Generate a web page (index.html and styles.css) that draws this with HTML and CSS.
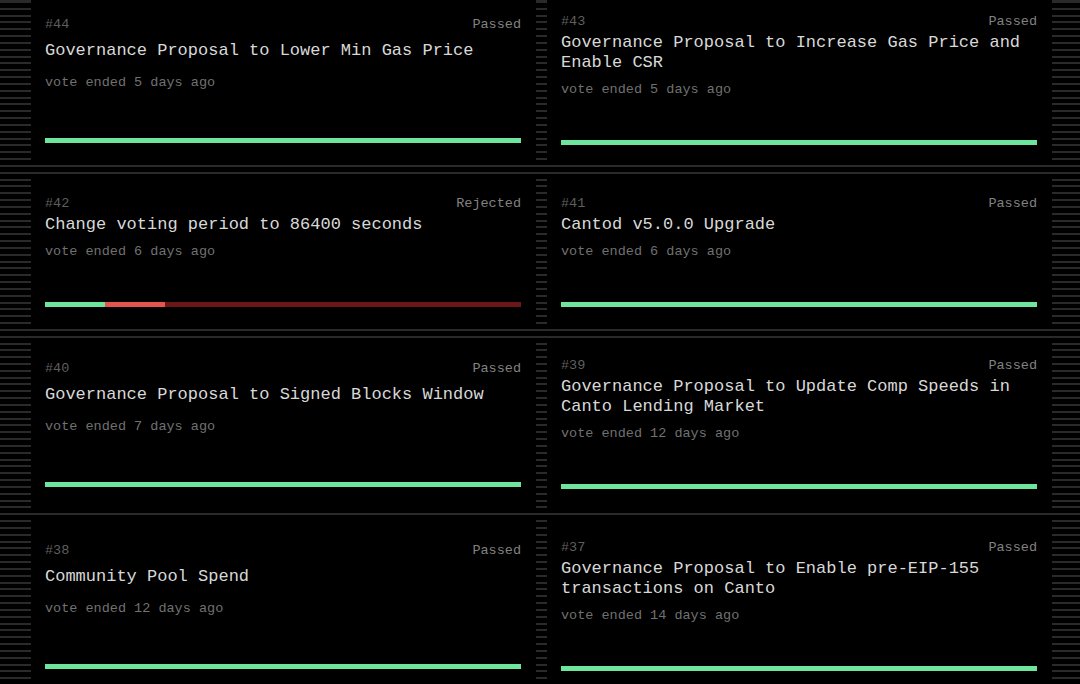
FILE: index.html
```html
<!DOCTYPE html>
<html lang="en">
<head>
<meta charset="utf-8">
<title>Proposals</title>
<link rel="stylesheet" href="styles.css">
</head>
<body>
<main class="page">
  <div class="grid">
    <section class="card">
      <div class="head"><span class="num">#44</span><span class="status">Passed</span></div>
      <div class="title">Governance Proposal to Lower Min Gas Price</div>
      <div class="date">vote ended 5 days ago</div>
      <div class="bar"><span class="yes" style="width:100%"></span></div>
    </section>
    <section class="card">
      <div class="head"><span class="num">#43</span><span class="status">Passed</span></div>
      <div class="title">Governance Proposal to Increase Gas Price and Enable CSR</div>
      <div class="date">vote ended 5 days ago</div>
      <div class="bar"><span class="yes" style="width:100%"></span></div>
    </section>
    <section class="card">
      <div class="head"><span class="num">#42</span><span class="status">Rejected</span></div>
      <div class="title">Change voting period to 86400 seconds</div>
      <div class="date">vote ended 6 days ago</div>
      <div class="bar rejected"><span class="yes" style="width:12.6%"></span><span class="no" style="width:12.6%"></span></div>
    </section>
    <section class="card">
      <div class="head"><span class="num">#41</span><span class="status">Passed</span></div>
      <div class="title">Cantod v5.0.0 Upgrade</div>
      <div class="date">vote ended 6 days ago</div>
      <div class="bar"><span class="yes" style="width:100%"></span></div>
    </section>
    <section class="card">
      <div class="head"><span class="num">#40</span><span class="status">Passed</span></div>
      <div class="title">Governance Proposal to Signed Blocks Window</div>
      <div class="date">vote ended 7 days ago</div>
      <div class="bar"><span class="yes" style="width:100%"></span></div>
    </section>
    <section class="card">
      <div class="head"><span class="num">#39</span><span class="status">Passed</span></div>
      <div class="title">Governance Proposal to Update Comp Speeds in Canto Lending Market</div>
      <div class="date">vote ended 12 days ago</div>
      <div class="bar"><span class="yes" style="width:100%"></span></div>
    </section>
    <section class="card">
      <div class="head"><span class="num">#38</span><span class="status">Passed</span></div>
      <div class="title">Community Pool Spend</div>
      <div class="date">vote ended 12 days ago</div>
      <div class="bar"><span class="yes" style="width:100%"></span></div>
    </section>
    <section class="card">
      <div class="head"><span class="num">#37</span><span class="status">Passed</span></div>
      <div class="title">Governance Proposal to Enable pre-EIP-155 transactions on Canto</div>
      <div class="date">vote ended 14 days ago</div>
      <div class="bar"><span class="yes" style="width:100%"></span></div>
    </section>
  </div>
</main>
</body>
</html>
```

FILE: styles.css
```css
html, body {
  margin: 0;
  padding: 0;
  height: 100%;
}

body {
  background-color: #000;
  background-image: repeating-linear-gradient(
    to bottom,
    #2a2a2a 0,
    #2a2a2a 2px,
    #000 2px,
    #000 6.83px
  );
  background-position: 0 1px;
  overflow: hidden;
  font-family: "Liberation Mono", "DejaVu Sans Mono", monospace;
}

.page {
  padding-left: 31px;
}

.grid {
  display: grid;
  grid-template-columns: 505px 505px;
  column-gap: 11px;
  row-gap: 11px;
  margin-top: -6px;
}

.card {
  background: #000;
  padding: 20px 15px 20px 14px;
  display: flex;
  flex-direction: column;
  justify-content: space-around;
}

.head {
  display: flex;
  justify-content: space-between;
  font-size: 13.5px;
  line-height: 16px;
}

.num {
  color: #5f5f5f;
}

.status {
  color: #828282;
}

.title {
  margin-top: 3px;
  font-size: 17px;
  line-height: 20px;
  color: #d8d8d8;
}

.date {
  margin-top: 9px;
  font-size: 13.5px;
  line-height: 16px;
  color: #717171;
}

.bar {
  margin-top: 42px;
  height: 5px;
  display: flex;
  background: #6ee59c;
}

.bar.rejected {
  background: #6b1717;
}

.yes {
  display: block;
  height: 100%;
  background: #6ee59c;
}

.no {
  display: block;
  height: 100%;
  background: #e5554e;
}
```
